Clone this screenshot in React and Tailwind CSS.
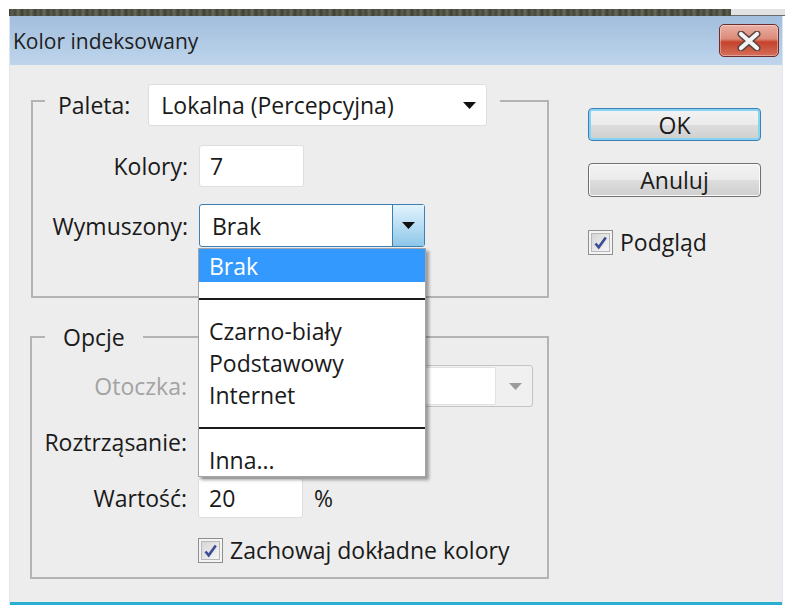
import React from 'react'

const Caret = ({ color = '#111' }) => (
  <svg width="13" height="7" viewBox="0 0 13 7">
    <path d="M0 0h13L6.5 7z" fill={color} />
  </svg>
)

function Checkbox() {
  return (
    <span className="flex h-[25px] w-[25px] shrink-0 items-center justify-center border border-[#8e8f8f] bg-[#f4f4f4] p-[2px]">
      <span className="flex h-full w-full items-center justify-center border border-[#b9b9b9] bg-[linear-gradient(135deg,#d6d6d6,#f6f6f6)]">
        <svg width="15" height="15" viewBox="0 0 15 15">
          <path d="M2.5 8.5l3.2 3.8L12.8 2.5" fill="none" stroke="#3b4e95" strokeWidth="2.6" />
        </svg>
      </span>
    </span>
  )
}

function CloseButton() {
  return (
    <div className="flex h-[33px] w-[60px] items-center justify-center rounded-[5px] border border-[#6e2b2b] bg-[linear-gradient(#eab0a4_0%,#dc8a78_45%,#c5422c_55%,#d4705a_100%)] shadow-[inset_0_0_0_1px_rgba(255,255,255,0.35)]">
      <svg width="26" height="20" viewBox="0 0 26 20">
        <path d="M5 3l16 14M21 3L5 17" stroke="#5a4545" strokeWidth="7" strokeLinecap="round" />
        <path d="M5 3l16 14M21 3L5 17" stroke="#f4f4f4" strokeWidth="4.2" strokeLinecap="round" />
      </svg>
    </div>
  )
}

// one list entry of the open "Wymuszony" menu
function MenuRow({ children, active, first }) {
  return (
    <div
      className={`flex items-center pl-[10px] ${first ? 'h-[33px]' : 'h-[32px]'} ${
        active ? 'bg-[#3399ff] text-white' : 'text-[#1a1a1a]'
      }`}
    >
      {children}
    </div>
  )
}

function MenuSeparator() {
  return (
    <div className="flex h-[33px] items-center">
      <div className="h-[2px] w-full bg-[#1a1a1a]" />
    </div>
  )
}

function Label({ children, disabled }) {
  return (
    <span className={`mr-[11px] w-[155px] text-right ${disabled ? 'text-[#a3a3a3]' : 'text-[#1a1a1a]'}`}>
      {children}
    </span>
  )
}

export default function App() {
  return (
    <div className="relative h-[605px] w-[785px] overflow-hidden bg-white font-['Open_Sans',sans-serif] text-[23px] leading-[30px] text-[#1a1a1a]">
      {/* strip of the document window behind */}
      <div className="mt-[9px] flex h-[7px]">
        <div className="ml-[9px] w-[722px] bg-[repeating-linear-gradient(90deg,#3d4035_0px,#5c5e50_3px,#45473b_6px,#6a6b5c_9px,#3d4035_13px)]" />
        <div className="flex-1 border-b border-[#6a6a6a] bg-[#e2e2e2]" />
      </div>

      <div className="ml-[9px] mr-[2px] flex h-[589px] flex-col border-x border-[#dbe6f1]">
        {/* title bar */}
        <div className="flex h-[49px] items-center justify-between bg-[linear-gradient(#a2bedd,#bed5ec)] pl-[3px] pr-[3px]">
          <span className="text-[21px] leading-[28px] text-[#1e1e1e]">Kolor indeksowany</span>
          <CloseButton />
        </div>

        {/* body */}
        <div className="flex flex-1 border-b-[3px] border-[#2aafd2] bg-[#ededed]">
          <div className="ml-[21px] flex w-[518px] flex-col pt-[11px]">
            <fieldset className="m-0 border-2 border-[#b3b3b3] p-0 pb-[49px]">
              <legend className="ml-[12px] flex items-center px-[13px] pt-[8px]">
                <span className="mr-[18px]">Paleta:</span>
                <span className="flex h-[42px] w-[339px] items-center justify-between rounded-[3px] border border-[#dedede] bg-white pl-[12px] pr-[10px]">
                  Lokalna (Percepcyjna)
                  <Caret />
                </span>
              </legend>

              <div className="mt-[19px] flex items-center">
                <Label>Kolory:</Label>
                <span className="flex h-[42px] w-[105px] items-center rounded-[3px] border border-[#dedede] bg-white pl-[10px]">
                  7
                </span>
              </div>

              <div className="mt-[17px] flex items-center">
                <Label>Wymuszony:</Label>
                <div className="relative">
                  <div className="flex h-[43px] w-[226px] rounded-[3px] border border-[#3c7fb1] bg-white">
                    <span className="flex flex-1 items-center pl-[12px]">Brak</span>
                    <span className="flex w-[32px] items-center justify-center border-l border-[#3c7fb1] bg-[linear-gradient(#e3f3fc,#b9def4_50%,#8cc6e8)]">
                      <Caret />
                    </span>
                  </div>

                  {/* open list */}
                  <div className="absolute left-[-1px] top-[44px] z-10 w-[228px] border border-[#a5a5a5] bg-white shadow-[3px_3px_3px_rgba(0,0,0,0.35)]">
                    <MenuRow active first>Brak</MenuRow>
                    <MenuSeparator />
                    <MenuRow>Czarno-biały</MenuRow>
                    <MenuRow>Podstawowy</MenuRow>
                    <MenuRow>Internet</MenuRow>
                    <MenuSeparator />
                    <MenuRow>Inna...</MenuRow>
                  </div>
                </div>
              </div>
            </fieldset>

            <fieldset className="m-0 -ml-px mt-[24px] border-2 border-[#b3b3b3] p-0 pb-[12px]">
              <legend className="ml-[13px] px-[18px]">Opcje</legend>

              <div className="mt-[13px] flex items-center">
                <Label disabled>Otoczka:</Label>
                <span className="flex h-[42px] w-[335px] items-center justify-between rounded-[3px] border border-[#c4c4c4] bg-[#f0f0f0] pr-[10px]">
                  <span className="h-[38px] w-[297px] rounded-[2px] border border-[#e2e2e2] bg-white" />
                  <Caret color="#9b9b9b" />
                </span>
              </div>

              <div className="mt-[14px] flex items-center">
                <Label>Roztrząsanie:</Label>
                <span className="h-[42px] w-[226px] rounded-[3px] border border-[#dedede] bg-white" />
              </div>

              <div className="mt-[15px] flex items-center">
                <Label>Wartość:</Label>
                <span className="flex h-[40px] w-[105px] items-center rounded-[3px] border border-[#dedede] bg-white pl-[10px]">
                  20
                </span>
                <span className="ml-[11px]">%</span>
              </div>

              <div className="mt-[17px] flex items-center pl-[166px]">
                <Checkbox />
                <span className="ml-[7px]">Zachowaj dokładne kolory</span>
              </div>
            </fieldset>
          </div>

          {/* buttons */}
          <div className="ml-[39px] flex w-[173px] flex-col pt-[43px]">
            <button className="h-[33px] rounded-[4px] border border-[#3c7fb1] bg-[linear-gradient(#f3f3f3_0%,#ebebeb_50%,#dddddd_51%,#cfcfcf_100%)] leading-[28px] shadow-[inset_0_0_0_2px_#86d3f6]">
              OK
            </button>
            <button className="mt-[22px] h-[34px] rounded-[4px] border border-[#707070] bg-[linear-gradient(#f3f3f3_0%,#ebebeb_50%,#dddddd_51%,#cfcfcf_100%)] leading-[28px] shadow-[inset_0_0_0_1px_#fbfbfb]">
              Anuluj
            </button>
            <div className="mt-[30px] flex items-center">
              <Checkbox />
              <span className="ml-[7px]">Podgląd</span>
            </div>
          </div>
        </div>
      </div>
    </div>
  )
}
